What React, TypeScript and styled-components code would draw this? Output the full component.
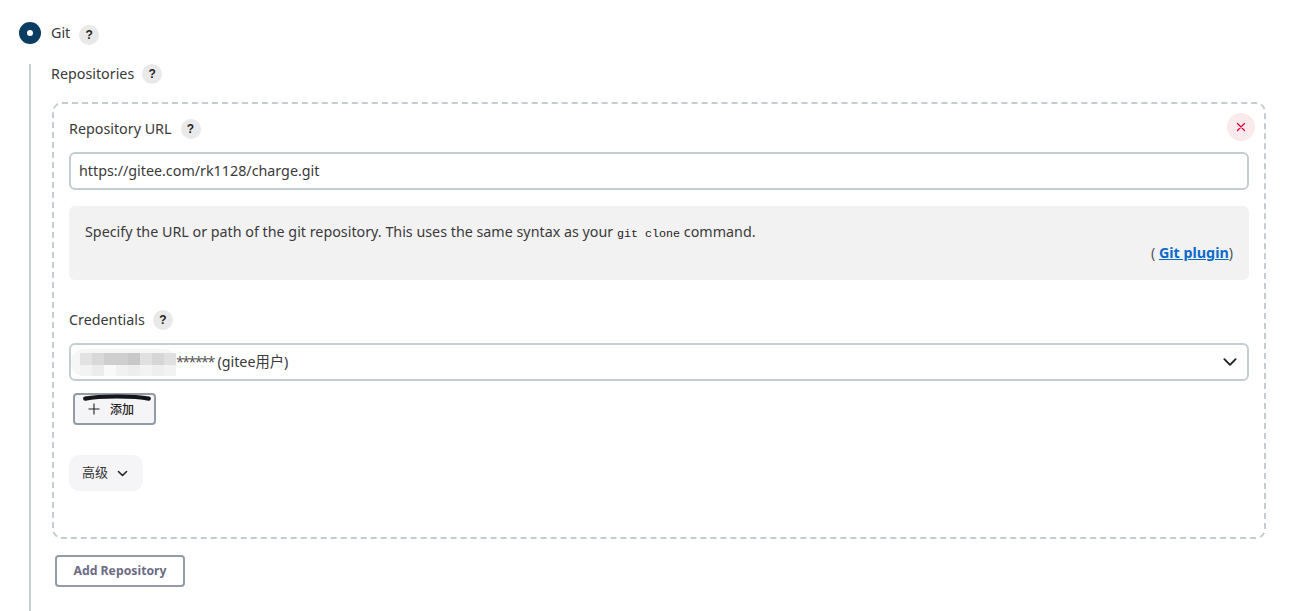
import React from "react";
import styled, { createGlobalStyle } from "styled-components";

const Global = createGlobalStyle`
  html, body { margin: 0; padding: 0; background: #fff; }
  body { font-family: "Noto Sans", "Noto Sans CJK SC", sans-serif; font-size: 14.3px; color: #3a3a3a; }
  * { box-sizing: border-box; }
`;

const Page = styled.div`
  width: 1299px;
  height: 611px;
  overflow: hidden;
  padding: 22px 0 0 19px;
`;

const RadioRow = styled.div`
  display: flex;
  align-items: flex-start;
  height: 22px;
`;

const Radio = styled.span`
  width: 22px;
  height: 22px;
  border-radius: 50%;
  background: #0b3d62;
  display: flex;
  align-items: center;
  justify-content: center;
  margin-right: 10px;
  &::after {
    content: "";
    width: 6px;
    height: 6px;
    border-radius: 50%;
    background: #fff;
  }
`;

const LabelRow = styled.div`
  display: flex;
  align-items: center;
  height: 20px;
  line-height: 20px;
`;

const GitLabel = styled(LabelRow)`
  margin-top: 1px;
`;

const Help = styled.span<{ $drop?: number; $gap?: number }>`
  width: 20px;
  height: 20px;
  margin-left: ${(p) => p.$gap ?? 9}px;
  margin-top: ${(p) => p.$drop ?? 0}px;
  border-radius: 50%;
  background: #e9e9e9;
  color: #222;
  font-family: "Liberation Sans", sans-serif;
  font-size: 12px;
  font-weight: 700;
  display: flex;
  align-items: center;
  justify-content: center;
`;

const Nested = styled.div`
  margin: 20px 0 0 10px;
  height: 547px;
  border-left: 2px solid #c3ced1;
  padding: 0 0 0 20px;
`;

const Card = styled.div`
  position: relative;
  width: 1214px;
  height: 437px;
  margin: 18px 0 0 1px;
  border: 2px dashed #c3cdd0;
  border-radius: 10px;
  padding: 15px 15px 0 15px;
`;

const Close = styled.button`
  position: absolute;
  top: 9px;
  right: 9px;
  width: 28px;
  height: 28px;
  padding: 0;
  border: 0;
  border-radius: 50%;
  background: #fbeaec;
  color: #e6003c;
  display: flex;
  align-items: center;
  justify-content: center;
`;

const Input = styled.div`
  height: 38px;
  margin-top: 13px;
  border: 2px solid #c3ced1;
  border-radius: 6px;
  padding: 0 8px 1px;
  display: flex;
  align-items: center;
`;

const HelpBox = styled.div`
  height: 74px;
  margin-top: 16px;
  padding: 15px 16px 0;
  background: #f2f2f2;
  border-radius: 6px;
  line-height: 21px;
`;

const Code = styled.code`
  font-family: "Liberation Mono", monospace;
  font-size: 11.7px;
  color: #222;
`;

const Attribution = styled.div`
  text-align: right;
  color: #555;
  height: 21px;
  margin-top: -3px;
`;

const PluginLink = styled.a`
  color: #0b6bcb;
  font-weight: 700;
  text-decoration: underline;
`;

const CredLabel = styled(LabelRow)`
  margin-top: 30px;
`;

const Select = styled.div`
  position: relative;
  height: 38px;
  margin-top: 13px;
  border: 2px solid #c3ced1;
  border-radius: 6px;
  padding: 0 8px 0;
  display: flex;
  align-items: center;
  justify-content: space-between;
`;

const SelectText = styled.span`
  padding: 0 0 3px 97px;
`;

const Stars = styled.span`
  letter-spacing: -1.6px;
  color: #555;
`;

const Mosaic = styled.svg`
  position: absolute;
  left: 0;
  top: 4px;
`;

const AddButton = styled.button`
  position: relative;
  display: flex;
  align-items: center;
  width: 83px;
  height: 32px;
  margin: 12px 0 0 4px;
  padding: 0 0 0 13px;
  border: 2px solid #929ba6;
  border-radius: 4px;
  background: #f5f5f8;
  color: #222;
  font-family: "Noto Sans CJK SC", sans-serif;
  font-size: 12px;
  font-weight: 500;
`;

const AddIcon = styled.svg`
  margin-right: 10px;
`;

const AddText = styled.span`
  padding-bottom: 1px;
`;

const Smear = styled.svg`
  position: absolute;
  left: 8px;
  top: -1px;
`;

const Advanced = styled.button`
  display: flex;
  align-items: center;
  width: 74px;
  height: 36px;
  margin-top: 30px;
  padding: 0 0 0 13px;
  border: 0;
  border-radius: 10px;
  background: #f5f5f8;
  color: #333;
  font-family: "Noto Sans CJK SC", sans-serif;
  font-size: 13px;
  gap: 8px;
`;

const AdvancedText = styled.span`
  padding-bottom: 3px;
`;

const AddRepo = styled.button`
  width: 130px;
  height: 32px;
  margin: 16px 0 0 4px;
  padding: 0 0 1px;
  border: 2px solid #929ba6;
  border-radius: 4px;
  background: #fff;
  color: #6b6b85;
  font-family: "Noto Sans", sans-serif;
  font-size: 12.25px;
  font-weight: 700;
  display: flex;
  align-items: center;
  justify-content: center;
`;

const mosaic: [number, number, string][] = [
  [9, 4, "#e2e2e2"], [21, 4, "#d8d8d8"], [33, 4, "#cecece"], [45, 4, "#cecece"],
  [57, 4, "#c8c8c8"], [69, 4, "#e0e0e0"], [81, 4, "#d6d6d6"], [93, 4, "#e0e0e0"],
  [9, 16, "#f3f3f3"], [21, 16, "#ececec"], [33, 16, "#f9f9f9"], [45, 16, "#f1f1f1"], [57, 16, "#ededed"],
  [69, 16, "#f3f3f3"], [81, 16, "#eeeeee"], [93, 16, "#f2f2f2"],
];

const Cross = () => (
  <svg width="12" height="12" viewBox="0 0 12 12" fill="none" stroke="currentColor" strokeWidth="1.3" strokeLinecap="round">
    <path d="M2.5 2.5l7 7M9.5 2.5l-7 7" />
  </svg>
);

const Chevron = ({ size, width }: { size: number; width: number }) => (
  <svg width={size} height={size} viewBox="0 0 16 16" fill="none" stroke="#222" strokeWidth={width} strokeLinecap="round" strokeLinejoin="round">
    <path d="M3 5.5l5 5 5-5" />
  </svg>
);

export default function App() {
  return (
    <Page>
      <Global />
      <RadioRow>
        <Radio />
        <GitLabel>
          Git
          <Help $drop={3}>?</Help>
        </GitLabel>
      </RadioRow>
      <Nested>
        <LabelRow>
          Repositories
          <Help $gap={8}>?</Help>
        </LabelRow>
        <Card>
          <Close aria-label="Delete"><Cross /></Close>
          <LabelRow>
            Repository URL
            <Help>?</Help>
          </LabelRow>
          <Input>https://gitee.com/rk1128/charge.git</Input>
          <HelpBox>
            Specify the URL or path of the git repository. This uses the same syntax as your <Code>git clone</Code> command.
            <Attribution>
              ( <PluginLink>Git plugin</PluginLink>)
            </Attribution>
          </HelpBox>
          <CredLabel>
            Credentials
            <Help $gap={8}>?</Help>
          </CredLabel>
          <Select>
            <SelectText><Stars>******</Stars> (gitee用户)</SelectText>
            <Chevron size={18} width={1.7} />
            <Mosaic width="106" height="27" viewBox="0 0 106 27">
              <rect x="0" y="0" width="106" height="27" rx="13" fill="#f6f6f6" />
              {mosaic.map(([x, y, c]) => (
                <rect key={`${x}-${y}`} x={x} y={y} width={12} height={12} fill={c} />
              ))}
            </Mosaic>
          </Select>
          <AddButton>
            <Smear width="68" height="7" viewBox="0 0 68 7">
              <path d="M2.2 4.6C16 1.8 52 1.8 65.8 4.6" fill="none" stroke="#15151c" strokeWidth="4.2" strokeLinecap="round" />
            </Smear>
            <AddIcon width="12" height="12" viewBox="0 0 12 12" stroke="#222" strokeWidth="1.1">
              <path d="M6 0.5v11M0.5 6h11" />
            </AddIcon>
            <AddText>添加</AddText>
          </AddButton>
          <Advanced>
            <AdvancedText>高级</AdvancedText>
            <Chevron size={13} width={1.9} />
          </Advanced>
        </Card>
        <AddRepo>Add Repository</AddRepo>
      </Nested>
    </Page>
  );
}
